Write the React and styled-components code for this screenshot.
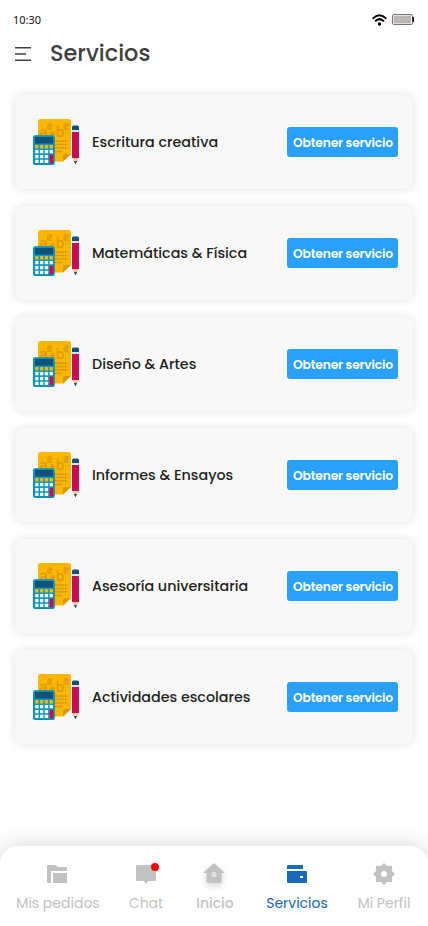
import React from 'react';
import styled, { createGlobalStyle } from 'styled-components';

const GlobalStyle = createGlobalStyle`
  *, *::before, *::after { box-sizing: border-box; }
  body { margin: 0; background: #fff; }
  svg { display: block; overflow: visible; }
`;

const Screen = styled.div`
  width: 100%;
  height: 926px;
  display: flex;
  flex-direction: column;
  background: #fff;
  font-family: Poppins, Inter, sans-serif;
  overflow: hidden;
`;

const StatusBar = styled.header`
  height: 36px;
  padding: 3px 13px 0;
  display: flex;
  align-items: center;
  justify-content: space-between;
`;

const Clock = styled.time`
  font: 400 11px/16px "Noto Sans", sans-serif;
  color: #111;
`;

const StatusIcons = styled.div`
  display: flex;
  align-items: center;
  gap: 5px;
`;

const TitleBar = styled.div`
  height: 59px;
  padding: 0 15px;
  display: flex;
  align-items: flex-start;
`;

const MenuButton = styled.button`
  margin: 11px 19px 0 0;
  padding: 0;
  border: 0;
  background: none;
`;

const Title = styled.h1`
  margin: 2px 0 0;
  font-size: 22.4px;
  line-height: 30px;
  font-weight: 500;
  color: #404040;
`;

const ServiceList = styled.main`
  flex: 1;
  padding: 0 15px;
  display: flex;
  flex-direction: column;
  gap: 17px;
`;

const Card = styled.article`
  height: 94px;
  padding: 0 15px 0 18px;
  display: flex;
  align-items: center;
  border-radius: 8px;
  background: #f8f8f8;
  box-shadow: 0 0 10px rgba(0, 0, 0, 0.12);
`;

const ServiceName = styled.h2`
  flex: 1;
  margin: 0 0 0 12px;
  font-size: 14.3px;
  line-height: 20px;
  font-weight: 500;
  white-space: nowrap;
  color: #231f20;
`;

const ServiceButton = styled.button`
  width: 111px;
  height: 30px;
  padding: 1px 0 0 1px;
  border: 0;
  border-radius: 3px;
  background: #29a0f9;
  color: #fff;
  font: 600 12.3px/18px Poppins, Inter, sans-serif;
  letter-spacing: -0.17px;
  white-space: nowrap;
`;

const BottomNav = styled.nav`
  height: 80px;
  display: grid;
  grid-template-columns: 116px 60px 78px 86px 88px;
  border-radius: 18px 18px 0 0;
  background: #fff;
  box-shadow: 0 0 22px rgba(0, 0, 0, 0.17);
`;

const NavItem = styled.a`
  padding-top: 16px;
  display: flex;
  flex-direction: column;
  align-items: center;
  color: ${(p) => (p.$active ? '#1769b9' : '#c2c2c2')};
`;

const NavLabel = styled.span`
  margin-top: 7px;
  font-size: 14px;
  line-height: 20px;
  font-weight: ${(p) => p.$weight || 400};
  white-space: nowrap;
`;

const NavIcon = styled.svg.attrs({ width: 24, height: 24, viewBox: '0 0 24 24', fill: 'currentColor' })`
  filter: ${(p) => (p.$raised ? 'drop-shadow(0 3px 3px rgba(0, 0, 0, 0.16))' : 'none')};
`;

const Wifi = () => (
  <svg width="15" height="12" viewBox="0 0 15 12" fill="none" stroke="#000" strokeWidth="2">
    <path d="M.7 4.6Q7.5-2 14.3 4.6M3.2 7.3Q7.5 3 11.8 7.3" />
    <circle cx="7.5" cy="10" r="1.7" fill="#000" stroke="none" />
  </svg>
);

const Battery = () => (
  <svg width="23" height="11" viewBox="0 0 23 11">
    <rect x=".5" y=".5" width="20" height="10" rx="1.4" fill="#fff" stroke="#777" />
    <rect x="1.6" y="1.6" width="17.4" height="7.8" fill="#bbb5b5" />
    <path d="M20.5 3H21.5Q22 3 22 3.5V7.5Q22 8 21.5 8H20.5Z" fill="#000" />
  </svg>
);

const MenuIcon = () => (
  <svg width="16" height="15" viewBox="0 0 16 15" stroke="#404040" strokeWidth="1.5">
    <path d="M0 .8H16M0 7H11M0 13.3H16" />
  </svg>
);

const StudyIcon = () => (
  <svg width="47" height="47" viewBox="0 0 47 47">
    <path d="M7.5 0H35.5Q38 0 38 2.5V35L30 42.5H7.5Q5 42.5 5 40V2.5Q5 0 7.5 0Z" fill="#fdb602" />
    <path d="M38 35L30 42.5V37Q30 35 32 35Z" fill="#d99a08" />
    <g fill="none" stroke="#dd9d08" strokeWidth="1.7">
      <path d="M7.7 11.7Q8 10.5 10 10.5Q13.2 10.5 13.2 13V18M13.2 13.8H9.8Q7.6 13.8 7.6 15.7Q7.6 17.5 9.7 17.5Q12.2 17.5 13.2 15.8" />
      <path d="M14.3 5H18.2V7.4H15V10H19" />
      <path d="M16.7 14.7H22M19.4 12V17.3" />
      <path d="M24.6 6.7V18M24.7 12.5Q25 10.8 27.3 10.8Q30 10.8 30 13.5V14.8Q30 17.4 27.3 17.4Q24.7 17.4 24.6 15" />
      <path d="M30.8 5H34.7V7.4H31.4V10H35.4" />
      <path d="M21 22.1H34.5M21 25.5H34.5M21 28.9H34.5M21 32.3H29" />
    </g>
    <rect x=".6" y="16.8" width="20.6" height="28.6" rx="1.5" fill="#069bc1" stroke="#078db1" strokeWidth="1.1" />
    <rect x="2" y="18" width="18" height="6.6" fill="#10517b" />
    {[0, 1, 2, 3].map((row) =>
      [0, 1, 2, 3].map((col) => (
        <rect
          key={`${row}-${col}`}
          x={2.2 + col * 4.8}
          y={26.1 + row * 4.9}
          width="3.3"
          height="3.3"
          rx=".4"
          fill={row === 0 ? '#fdb602' : '#fff'}
        />
      ))
    )}
    <rect x="16.4" y="35.7" width="3.8" height="8.5" fill="#c90b55" />
    <path d="M39 11V8Q39 6.5 40.5 6.5H44.5Q46 6.5 46 8V11Z" fill="#10517b" />
    <path d="M39 11H46V13H39Z" fill="#d7e2ea" />
    <path d="M39 13H46V39H39Z" fill="#c90b55" />
    <path d="M39.3 39H45.7L43.5 44H41.5Z" fill="#f5c6a0" />
    <path d="M41 42H44L42.5 45.5Z" fill="#10517b" />
  </svg>
);

const FolderIcon = () => (
  <NavIcon>
    <path d="M1 4Q1 3 2 3H9.5L12 5H21V9H5V21H2Q1 21 1 20Z" />
    <path d="M7 11H21V20Q21 21 20 21H7Z" />
  </NavIcon>
);

const ChatIcon = () => (
  <NavIcon>
    <path d="M3 3H21Q22 3 22 4V18Q22 19 21 19H14L12 22.2L10 19H3Q2 19 2 18V4Q2 3 3 3Z" />
    <circle cx="21" cy="5" r="4" fill="#f00" />
  </NavIcon>
);

const HomeIcon = () => (
  <NavIcon $raised>
    <path fillRule="evenodd" d="M11 1L22 11H18.5V20Q18.5 21 17.5 21H4.5Q3.5 21 3.5 20V11H0ZM11 9.8A2.6 2.6 0 1 0 11 15A2.6 2.6 0 1 0 11 9.8Z" />
  </NavIcon>
);

const WalletIcon = () => (
  <NavIcon>
    <path d="M2 4Q2 3 3 3H18V7H2Z" />
    <path fillRule="evenodd" d="M2 9H21Q22 9 22 10V20Q22 21 21 21H3Q2 21 2 20ZM15 14V16H18V14Z" />
  </NavIcon>
);

const GearIcon = () => (
  <NavIcon>
    <path fillRule="evenodd" d="M12 1L15 4H20V9L23 12L20 15V20H15L12 23L9 20H4V15L1 12L4 9V4H9ZM12 9A3 3 0 1 0 12 15A3 3 0 1 0 12 9Z" />
  </NavIcon>
);

const services = [
  'Escritura creativa',
  'Matemáticas & Física',
  'Diseño & Artes',
  'Informes & Ensayos',
  'Asesoría universitaria',
  'Actividades escolares',
];

const navItems = [
  { label: 'Mis pedidos', Icon: FolderIcon },
  { label: 'Chat', Icon: ChatIcon },
  { label: 'Inicio', Icon: HomeIcon, weight: 500 },
  { label: 'Servicios', Icon: WalletIcon, active: true },
  { label: 'Mi Perfil', Icon: GearIcon },
];

export default function App() {
  return (
    <Screen>
      <GlobalStyle />
      <StatusBar>
        <Clock>10:30</Clock>
        <StatusIcons>
          <Wifi />
          <Battery />
        </StatusIcons>
      </StatusBar>
      <TitleBar>
        <MenuButton aria-label="Menú">
          <MenuIcon />
        </MenuButton>
        <Title>Servicios</Title>
      </TitleBar>
      <ServiceList>
        {services.map((name) => (
          <Card key={name}>
            <StudyIcon />
            <ServiceName>{name}</ServiceName>
            <ServiceButton>Obtener servicio</ServiceButton>
          </Card>
        ))}
      </ServiceList>
      <BottomNav>
        {navItems.map(({ label, Icon, weight, active }) => (
          <NavItem key={label} $active={active}>
            <Icon />
            <NavLabel $weight={weight}>{label}</NavLabel>
          </NavItem>
        ))}
      </BottomNav>
    </Screen>
  );
}
